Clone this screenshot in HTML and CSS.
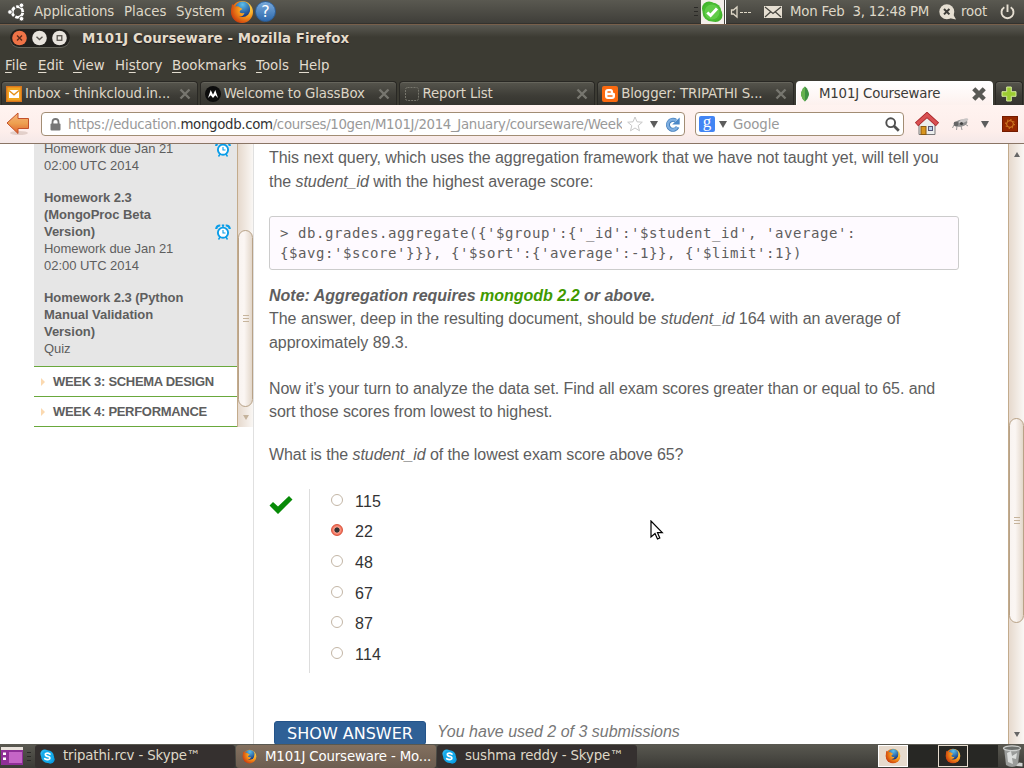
FILE: index.html
```html
<!DOCTYPE html>
<html lang="en">
<head>
  <meta charset="UTF-8">
  <title>M101J Courseware</title>
  <link rel="stylesheet" href="styles.css">
</head>
<body>

  <!-- Shared icons -->
  <svg class="defs" width="0" height="0">
    <defs>
      <radialGradient id="fox" cx="0.75" cy="0.3" r="0.85">
        <stop offset="0" stop-color="#ffe45a"/><stop offset="0.45" stop-color="#f89a1c"/><stop offset="1" stop-color="#c8360c"/>
      </radialGradient>
      <radialGradient id="globe" cx="0.5" cy="0.2" r="0.8">
        <stop offset="0" stop-color="#5cc0ec"/><stop offset="1" stop-color="#12317c"/>
      </radialGradient>
      <linearGradient id="arrow" x1="0" y1="0" x2="0" y2="1">
        <stop offset="0" stop-color="#f9b27a"/><stop offset="0.5" stop-color="#eda050"/><stop offset="1" stop-color="#e0602c"/>
      </linearGradient>
    </defs>
    <symbol id="firefox" viewBox="0 0 24 24">
      <circle cx="12" cy="12" r="11" fill="url(#fox)"/>
      <circle cx="12.5" cy="9.3" r="7.8" fill="url(#globe)"/>
      <path d="M2 4 L5 6.5 Q8 5.5 10 7.5 L12.5 9 Q10 10 9.5 12 Q11 14 14.5 13 Q13 17 9 16.5 Q12 20 17 17 Q21 14 20 7 Q24 12 21 17.5 Q17 23 11 22.5 Q3 21.5 1.5 14 Q1 8 2 4Z" fill="url(#fox)"/>
    </symbol>
    <symbol id="skype" viewBox="0 0 16 16">
      <circle cx="5" cy="5" r="4.6" fill="#2bb6f0"/><circle cx="11" cy="11" r="4.6" fill="#0a9be2"/><circle cx="8" cy="8" r="6.8" fill="#14a9ea"/>
      <path d="M10.7 5.4 Q8 3.4 5.9 5 Q5 7.2 8 7.8 Q11.4 8.5 10.3 10.6 Q8 12.3 5 10.4" fill="none" stroke="#fff" stroke-width="1.8" stroke-linecap="round"/>
    </symbol>
    <symbol id="close" viewBox="0 0 12 12">
      <path d="M1.5 1.5 L10.5 10.5 M10.5 1.5 L1.5 10.5" stroke="currentColor" stroke-width="2.4"/>
    </symbol>
    <symbol id="close-bold" viewBox="0 0 12 12">
      <path d="M1.5 1.5 L10.5 10.5 M10.5 1.5 L1.5 10.5" stroke="currentColor" stroke-width="3.8"/>
    </symbol>
    <symbol id="clock" viewBox="0 0 16 16">
      <circle cx="8" cy="8.7" r="5.1" fill="#fff" stroke="#0a9de8" stroke-width="1.9"/>
      <path d="M8 6 V9 H10.5" stroke="#0a9de8" stroke-width="1.1" fill="none"/>
      <path d="M1.2 5 Q1.5 1.2 5.3 1.5 M14.8 5 Q14.5 1.2 10.7 1.5" stroke="#0a9de8" stroke-width="2.2" fill="none"/>
      <path d="M3.5 15.5 L5 13.2 M12.5 15.5 L11 13.2 M6.8 1.2 H9.2 M8 1 V3.5" stroke="#0a9de8" stroke-width="1.5"/>
    </symbol>
  </svg>

  <!-- Top panel -->
  <div class="panel">
    <svg class="ubuntu" width="20" height="20" viewBox="0 0 20 20">
      <circle cx="10.5" cy="10" r="5.3" fill="none" stroke="#fff" stroke-width="2.8" stroke-dasharray="9.6 1.5" stroke-dashoffset="-0.8"/>
      <g fill="#fff" stroke="#494842" stroke-width="0.8"><circle cx="3" cy="10" r="2.3"/><circle cx="14.5" cy="3.3" r="2.3"/><circle cx="14.5" cy="16.7" r="2.3"/></g>
    </svg>
    <span class="pm-apps">Applications</span>
    <span class="pm-places">Places</span>
    <span class="pm-system">System</span>
    <svg class="pm-fox" width="24" height="24"><use href="#firefox"/></svg>
    <span class="help-icon">?</span>
    <div class="tray">
      <span class="grip"></span>
      <span class="skype-status">
        <svg width="22" height="24" viewBox="0 0 22 24">
          <circle cx="8" cy="8.5" r="7" fill="#42b42c"/><circle cx="14.5" cy="15" r="7" fill="#42b42c"/><circle cx="11" cy="12" r="9.5" fill="#48bb31"/><circle cx="11" cy="12" r="7.5" fill="#61cc48"/>
          <path d="M6.3 12.5 L9.6 15.5 L16 8.5" stroke="#fff" stroke-width="3" fill="none"/>
        </svg>
      </span>
      <svg class="speaker" width="22" height="14" viewBox="0 0 22 14">
        <path d="M1.5 5 H3.5 L7 2 V12 L3.5 9 H1.5Z" fill="none" stroke="#dfd8c8" stroke-width="1.3"/>
        <path d="M10 7.5 H21" stroke="#dfd8c8" stroke-dasharray="3 1"/>
      </svg>
      <svg class="mail" width="18" height="12" viewBox="0 0 18 12">
        <rect width="18" height="12" fill="#e6dfd2"/>
        <path d="M1 1 L9 7.5 L17 1 M1 11 L6.5 6 M17 11 L11.5 6" fill="none" stroke="#45443e" stroke-width="1.2"/>
      </svg>
      <span class="date">Mon Feb&nbsp; 3, 12:48 PM</span>
      <svg class="me" width="18" height="16" viewBox="0 0 18 16">
        <circle cx="7.8" cy="7.7" r="7.5" fill="#e6dfd2"/><path d="M10 14 L17 15.5 L14 10Z" fill="#e6dfd2"/>
        <path d="M5 5 L10.4 10.4 M10.4 5 L5 10.4" stroke="#3c3b37" stroke-width="2"/>
      </svg>
      <span class="user">root</span>
      <svg class="power" width="15" height="16" viewBox="0 0 15 16">
        <path d="M4.3 3.2 A6 6 0 1 0 10.7 3.2 M7.5 0.5 V8" fill="none" stroke="#e6dfd2" stroke-width="1.9"/>
      </svg>
    </div>
  </div>

  <!-- Window title -->
  <div class="titlebar">
    <div class="window-buttons">
      <svg width="60" height="18" viewBox="0 0 60 18">
        <circle cx="9.5" cy="9" r="7.3" fill="#ef7347"/><path d="M7 6.5 L12 11.5 M12 6.5 L7 11.5" stroke="#5c2b1b" stroke-width="1.4"/>
        <circle cx="29.5" cy="9" r="7.3" fill="#e8e4de"/><path d="M26.5 7.8 L29.5 10.6 L32.5 7.8" fill="none" stroke="#5a5650" stroke-width="1.4"/>
        <circle cx="49.5" cy="9" r="7.3" fill="#e8e4de"/><rect x="47.2" y="6.7" width="4.6" height="4.6" fill="none" stroke="#5a5650" stroke-width="1.3"/>
      </svg>
    </div>
    <span class="window-title">M101J Courseware - Mozilla Firefox</span>
  </div>

  <div class="menubar">
    <span class="m1"><u>F</u>ile</span>
    <span class="m2"><u>E</u>dit</span>
    <span class="m3"><u>V</u>iew</span>
    <span class="m4">Hi<u>s</u>tory</span>
    <span class="m5"><u>B</u>ookmarks</span>
    <span class="m6"><u>T</u>ools</span>
    <span class="m7"><u>H</u>elp</span>
  </div>

  <!-- Browser tabs -->
  <div class="tabs">
    <div class="tab">
      <svg width="16" height="16" viewBox="0 0 16 16"><rect x="0.7" y="0.7" width="14.6" height="14.6" fill="#f0a520" stroke="#d9761c" stroke-width="1.4"/><rect x="3" y="4" width="10" height="8" fill="#fff"/><path d="M3 4.5 L8 8.8 L13 4.5" fill="none" stroke="#e48f17" stroke-width="1.3"/></svg>
      <span class="tab-label">Inbox - thinkcloud.in...</span>
      <svg class="tab-close" width="12" height="12"><use href="#close"/></svg>
    </div>
    <div class="tab">
      <svg width="16" height="16" viewBox="0 0 16 16"><circle cx="8" cy="8" r="8" fill="#0c0c0c"/><path d="M3 12 L5.7 4 L8 8.8 L10.3 4 L13 12 L10.3 9.2 L8 12 L5.7 9.2Z" fill="#fff"/></svg>
      <span class="tab-label">Welcome to GlassBox</span>
      <svg class="tab-close" width="12" height="12"><use href="#close"/></svg>
    </div>
    <div class="tab">
      <svg width="16" height="16" viewBox="0 0 16 16"><rect x="1.5" y="1.5" width="13" height="13" rx="2" fill="none" stroke="#77766c" stroke-dasharray="2 1"/></svg>
      <span class="tab-label">Report List</span>
      <svg class="tab-close" width="12" height="12"><use href="#close"/></svg>
    </div>
    <div class="tab">
      <svg width="16" height="16" viewBox="0 0 16 16"><rect width="16" height="16" rx="2" fill="#fb6a10"/><path d="M6 3 H8.5 Q11 3 11 5.8 Q11 7 12 7 Q13 7 13 8 V10 Q13 13 10 13 H6 Q3 13 3 10 V6 Q3 3 6 3Z" fill="#fff"/><path d="M6 6 H8.2 M6 10 H10" stroke="#fb6a10" stroke-width="1.5" stroke-linecap="round"/></svg>
      <span class="tab-label">Blogger: TRIPATHI S...</span>
      <svg class="tab-close" width="12" height="12"><use href="#close"/></svg>
    </div>
    <div class="tab active">
      <svg width="16" height="16" viewBox="0 0 16 16"><path d="M7 0.5 Q3 4 3 9 Q4 13 7 15.5 Q10 13 11 9 Q11 4 7 0.5Z" fill="#3f9142"/><path d="M7 0.5 Q3 4 3 9 Q4 13 7 15.5Z" fill="#66b24f"/></svg>
      <span class="tab-label">M101J Courseware</span>
      <svg class="tab-close" width="14" height="14"><use href="#close-bold"/></svg>
    </div>
    <div class="tab new-tab">
      <svg width="16" height="16" viewBox="0 0 16 16"><path d="M5.7 1 H10.3 V5.7 H15 V10.3 H10.3 V15 H5.7 V10.3 H1 V5.7 H5.7Z" fill="#9ccc32" stroke="#d6eb9c"/></svg>
    </div>
  </div>

  <!-- Navigation bar -->
  <div class="navbar">
    <svg class="back" width="24" height="24" viewBox="0 0 24 24"><ellipse cx="13" cy="21" rx="9" ry="2" fill="#e3d0ca"/><path d="M1 11 L12 1 V6.5 H22.5 V16.5 H12 V21.5Z" fill="url(#arrow)" stroke="#c3502a"/></svg>
    <div class="urlbar">
      <svg width="11" height="13" viewBox="0 0 11 13"><path d="M2.5 6 V4 Q2.5 1 5.5 1 Q8.5 1 8.5 4 V6" fill="none" stroke="#777" stroke-width="1.8"/><rect x="0.5" y="5.5" width="10" height="7" rx="1" fill="#777"/></svg>
      <span class="url">https://education.<b>mongodb.com</b>/courses/10gen/M101J/2014_January/courseware/Week</span>
      <svg class="star" width="16" height="16" viewBox="0 0 16 16"><path d="M8 1 L10 5.8 L15.3 6.2 L11.2 9.6 L12.5 14.8 L8 12 L3.5 14.8 L4.8 9.6 L0.7 6.2 L6 5.8Z" fill="#fff" stroke="#c8c8c8"/></svg>
      <span class="drop"></span>
      <svg class="reload" width="15" height="15" viewBox="0 0 15 15"><path d="M12.5 10 A5 5 0 1 1 10.8 3.7" fill="none" stroke="#4580bd" stroke-width="4"/><path d="M14.7 0.5 V7.5 H7.2 Z" fill="#4a88c8"/><path d="M12.2 10 A5 5 0 1 1 10.8 3.7" fill="none" stroke="#7eaee0" stroke-width="2.4"/></svg>
    </div>
    <div class="searchbar">
      <span class="google">g</span>
      <span class="drop"></span>
      <span class="placeholder">Google</span>
      <svg width="15" height="15" viewBox="0 0 15 15"><circle cx="5.7" cy="5.7" r="4.4" fill="none" stroke="#505050" stroke-width="1.9"/><path d="M9 9 L13.8 13.8" stroke="#505050" stroke-width="2.7"/></svg>
    </div>
    <svg class="home" width="24" height="24" viewBox="0 0 24 24"><path d="M4 11 L12 4 L20 11 V22.5 H4Z" fill="#eceeed" stroke="#777"/><rect x="6" y="14.5" width="5" height="8" fill="#d9961f" stroke="#8b5a10"/><rect x="13.5" y="14.5" width="4" height="4" fill="#b8d0e6" stroke="#557"/><path d="M1.5 12.5 L12 3 L22.5 12.5" fill="none" stroke="#a52428" stroke-width="5"/><path d="M2 12 L12 3 L22 12" fill="none" stroke="#d95052" stroke-width="3.4"/></svg>
    <svg class="fly" width="18" height="14" viewBox="0 0 18 14"><path d="M2 8 L0.5 11 M5 9 L4.5 13 M9 9 L10 13 M13 7 L16 9" stroke="#999"/><ellipse cx="9" cy="6.2" rx="6.5" ry="3.4" fill="#8f8f8f" transform="rotate(-12 9 6)"/><ellipse cx="11.5" cy="4" rx="5" ry="1.8" fill="#c8c5c5" transform="rotate(-20 11 4)"/><circle cx="4" cy="7" r="2.4" fill="#666"/><circle cx="9.5" cy="6.5" r="1.6" fill="#444"/></svg>
    <span class="drop nav-drop"></span>
    <svg class="gear" width="16" height="16" viewBox="0 0 16 16"><rect x="0.5" y="0.5" width="15" height="15" fill="#962800" stroke="#741c00"/><circle cx="8" cy="8" r="3.4" fill="none" stroke="#d98a28"/><circle cx="8" cy="8" r="4.5" fill="none" stroke="#d98a28" stroke-dasharray="1.3 2.2"/></svg>
  </div>

  <!-- Page -->
  <div class="page">
    <div class="sidebar">
      <div class="lessons">
        <div class="lesson">
          <div class="lesson-text">Homework due Jan 21<br>02:00 UTC 2014</div>
          <svg class="clock first" width="16" height="16"><use href="#clock"/></svg>
        </div>
        <div class="lesson">
          <div class="lesson-text"><strong>Homework 2.3<br>(MongoProc Beta<br>Version)</strong><br>Homework due Jan 21<br>02:00 UTC 2014</div>
          <svg class="clock" width="16" height="16"><use href="#clock"/></svg>
        </div>
        <div class="lesson">
          <div class="lesson-text"><strong>Homework 2.3 (Python<br>Manual Validation<br>Version)</strong><br>Quiz</div>
        </div>
      </div>
      <div class="week"><span class="caret"></span>WEEK 3: SCHEMA DESIGN</div>
      <div class="week"><span class="caret"></span>WEEK 4: PERFORMANCE</div>
    </div>
    <div class="scroll side-scroll">
      <div class="thumb"><span class="lines"></span></div>
      <span class="scroll-down"></span>
    </div>

    <div class="content">
      <p class="intro">This next query, which uses the aggregation framework that we have not taught yet, will tell you<br>the <em>student_id</em> with the highest average score:</p>
      <pre>&gt; db.grades.aggregate({'$group':{'_id':'$student_id', 'average':
{$avg:'$score'}}}, {'$sort':{'average':-1}}, {'$limit':1})</pre>
      <p class="note">Note: Aggregation requires <a>mongodb 2.2</a> or above.</p>
      <p class="answer">The answer, deep in the resulting document, should be <em>student_id</em> 164 with an average of<br>approximately 89.3.</p>
      <p class="exercise">Now it’s your turn to analyze the data set. Find all exam scores greater than or equal to 65. and<br>sort those scores from lowest to highest.</p>
      <p class="question">What is the <em>student_id</em> of the lowest exam score above 65?</p>

      <div class="problem">
        <svg class="check" width="24" height="20" viewBox="0 0 24 20"><path d="M0.5 10.5 L4 7 L9 11.5 L20 1 L23.5 4.5 L9 19Z" fill="#078a07"/></svg>
        <div class="choices">
          <div class="choice"><span class="radio"></span>115</div>
          <div class="choice"><span class="radio checked"></span>22</div>
          <div class="choice"><span class="radio"></span>48</div>
          <div class="choice"><span class="radio"></span>67</div>
          <div class="choice"><span class="radio"></span>87</div>
          <div class="choice"><span class="radio"></span>114</div>
        </div>
      </div>

      <div class="actions">
        <span class="show-answer">SHOW ANSWER</span>
        <span class="used">You have used 2 of 3 submissions</span>
      </div>
    </div>

    <div class="scroll main-scroll">
      <span class="scroll-up"></span>
      <div class="thumb"><span class="lines"></span></div>
      <span class="scroll-down"></span>
    </div>
  </div>

  <!-- Bottom panel -->
  <div class="taskbar">
    <svg class="desktop" width="22" height="18" viewBox="0 0 22 18"><rect width="22" height="18" fill="#8f2f97"/><rect x="8" y="5" width="13" height="11" fill="#c565c6"/><rect width="22" height="3" fill="#e9e3dc"/><path d="M2 5.5 H5 V8 H2Z M2 10.5 H5 V13 H2Z" fill="#fff"/></svg>
    <span class="grip"></span>
    <div class="task"><svg width="15" height="15"><use href="#skype"/></svg><span>tripathi.rcv - Skype™</span></div>
    <div class="task current"><svg width="15" height="15"><use href="#firefox"/></svg><span>M101J Courseware - Mo...</span></div>
    <div class="task"><svg width="15" height="15"><use href="#skype"/></svg><span>sushma reddy - Skype™</span></div>
    <div class="workspaces">
      <div class="workspace on"><svg width="16" height="16"><use href="#firefox"/></svg></div>
      <div class="workspace empty"></div>
      <div class="workspace"><svg width="16" height="16"><use href="#firefox"/></svg></div>
      <div class="workspace empty"></div>
    </div>
    <svg class="trash" width="21" height="23" viewBox="0 0 21 23"><path d="M2 3 L4 20 Q10 24 16 20 L18 3Z" fill="#9a9c9a"/><path d="M5 8 L9 6 L10 11 L15 8 L14 14 L10 13 L11 19 L6 17Z" fill="#dcdedc"/><ellipse cx="10" cy="3.3" rx="8.5" ry="2.4" fill="#6c6f6c" stroke="#cfd1cf" stroke-width="1.3"/><path d="M14 21 L17 17.5 L20.5 18 V21.5Z" fill="#d0d2d0"/></svg>
  </div>

  <!-- Mouse pointer -->
  <svg class="pointer" width="14" height="21" viewBox="0 0 14 21"><path d="M1 1 V17 L5 13.5 L7.5 19 L9.8 18 L7.5 12.7 H12.3Z" fill="#fff" stroke="#000" stroke-width="1.2"/></svg>

</body>
</html>
```
FILE: styles.css
```css
* {
  box-sizing: border-box;
}

body {
  margin: 0;
  width: 1024px;
  height: 768px;
  overflow: hidden;
  background: #fff;
  font-family: "DejaVu Sans", sans-serif;
  font-size: 13.33px;
  white-space: nowrap;
}

svg {
  display: block;
  flex: none;
}

.defs {
  position: absolute;
}

/* Top panel */
.panel {
  display: flex;
  align-items: center;
  height: 24px;
  padding-left: 7px;
  background: linear-gradient(#5a5951, #3f3e39);
  border-bottom: 1px solid #33322e;
  color: #dfd8c8;
}

.ubuntu {
  margin-top: 1px;
}

.panel span {
  flex: none;
}

.pm-apps {
  width: 90px;
  margin-left: 7px;
  letter-spacing: -0.1px;
}

.pm-places {
  width: 52px;
}

.pm-system {
  width: 54px;
  letter-spacing: -0.15px;
}

.panel .help-icon {
  width: 21px;
  height: 21px;
  margin-left: 1px;
  border-radius: 50%;
  background: linear-gradient(#79aadb, #2e69ad);
  border: 1px solid #2c5e99;
  color: #fff;
  font-size: 16px;
  line-height: 19px;
  text-align: center;
}

.tray {
  display: flex;
  align-items: center;
  flex: none;
  width: 330px;
  margin-left: auto;
}

.grip {
  width: 4px;
  height: 9px;
  background: repeating-linear-gradient(#2b2a27 0 1px, transparent 1px 4px);
}

.skype-status {
  width: 24px;
  height: 24px;
  margin-left: 3px;
  background: #f4eeea;
  border-right: 1px solid #45443e;
  box-shadow: 1px 0 #fff;
}

.speaker {
  margin-left: 5px;
}

.mail {
  margin-left: 12px;
}

.date {
  width: 148px;
  margin-left: 8px;
  letter-spacing: -0.22px;
}

.me {
  margin-left: 1px;
}

.user {
  width: 39px;
  margin-left: 4px;
  letter-spacing: -0.2px;
}

/* Title bar and menu */
.titlebar {
  display: flex;
  align-items: center;
  height: 28px;
  padding-left: 10px;
  background: linear-gradient(#5a5952, #3c3b33 45%);
  border-top: 1px solid #775f4b;
}

.window-buttons {
  width: 60px;
  height: 18px;
  margin-top: -2px;
  border-radius: 9px;
  background: #22211e;
  box-shadow: 0 1px #66655c;
}

.window-title {
  margin-left: 12px;
  color: #e5dccb;
  font-weight: bold;
  letter-spacing: 0.07px;
  text-shadow: 0 1px 1px #201c20;
}

.menubar {
  display: flex;
  align-items: center;
  height: 27px;
  padding-left: 5px;
  background: #3c3b33;
  color: #e2dccf;
}

.menubar u {
  text-underline-offset: 2px;
}

.m1 { width: 33px; }
.m2 { width: 35px; }
.m3 { width: 42px; }
.m4 { width: 57px; }
.m5 { width: 84px; }
.m6 { width: 43px; }

/* Tabs */
.tabs {
  display: flex;
  align-items: flex-end;
  gap: 2px;
  height: 26px;
  padding-left: 1px;
  background: #3c3b33;
}

.tab {
  display: flex;
  align-items: center;
  width: 196.75px;
  height: 24px;
  padding: 0 6px 0 4px;
  border: 1px solid #292824;
  border-bottom: 0;
  border-radius: 4px 4px 0 0;
  background: linear-gradient(#56554d, #3d3c36 60%, #35342f);
  box-shadow: inset 0 1px #66655c;
  color: #ddd5c6;
}

.tab-label {
  margin-left: 3px;
  letter-spacing: -0.14px;
}

.tab-close {
  margin-left: auto;
  color: #77766f;
}

.tab.active {
  padding-left: 1px;
  background: linear-gradient(#fff, #fdf1ee);
  border-color: #fff;
  box-shadow: none;
  color: #3c3b37;
}

.active .tab-label {
  margin-left: 5px;
  letter-spacing: -0.18px;
}

.active .tab-close {
  color: #595955;
}

.tab.new-tab {
  width: 28px;
  padding: 0 0 0 5px;
}

/* Navigation */
.navbar {
  display: flex;
  align-items: center;
  height: 39px;
  padding-left: 6px;
  background: linear-gradient(#fff3f0, #fdeeeb 70%, #f4e8e8);
  border-bottom: 1px solid #8a7565;
}

.urlbar,
.searchbar {
  display: flex;
  align-items: center;
  height: 24px;
  border: 1px solid #a28d74;
  border-radius: 4px;
  background: #fff;
}

.urlbar {
  width: 644px;
  margin-left: 11px;
  padding-left: 8px;
}

.url {
  width: 554px;
  margin-left: 7px;
  overflow: hidden;
  color: #999;
  letter-spacing: -0.32px;
}

.url b {
  color: #333;
  font-weight: normal;
}

.star {
  margin-left: 5px;
}

.drop {
  width: 0;
  height: 0;
  margin-left: 7px;
  border: 4px solid transparent;
  border-top: 7px solid #5c5c5c;
  border-bottom: 0;
}

.reload {
  margin-left: 7px;
}

.searchbar {
  width: 209px;
  margin-left: 10px;
  padding: 0 3px;
}

.google {
  width: 16px;
  height: 16px;
  border-radius: 2px;
  background: #4285f4;
  color: #fff;
  font: 17px/12px "Liberation Serif", serif;
  text-align: center;
}

.searchbar .drop {
  margin-left: 4px;
}

.placeholder {
  flex: 1;
  margin-left: 6px;
  color: #999;
  letter-spacing: -0.1px;
}

.home {
  margin-left: 11px;
}

.fly {
  margin-left: 13px;
}

.nav-drop {
  margin-left: 11px;
}

.gear {
  margin-left: 13px;
}

/* Page */
.page {
  display: flex;
  align-items: flex-start;
  height: 600px;
  padding-left: 34px;
  overflow: hidden;
  font-family: "Liberation Sans", Arial, sans-serif;
  font-size: 16px;
  color: #5e5e5e;
}

.sidebar {
  width: 203px;
  font-size: 13px;
}

.lessons {
  height: 222px;
  background: #e6e6e6;
  overflow: hidden;
}

.lesson {
  display: flex;
  align-items: center;
  padding-left: 10px;
  margin-bottom: 15px;
  line-height: 17px;
  letter-spacing: -0.04px;
}

.lesson:first-child {
  margin-top: -4px;
}

.lesson-text {
  width: 171px;
}

.clock.first {
  margin-top: -17px;
}

.week {
  display: flex;
  align-items: center;
  height: 30px;
  border-top: 1px solid #69a83c;
  font-weight: bold;
  letter-spacing: -0.3px;
}

.week:last-child {
  height: 31px;
  border-bottom: 1px solid #69a83c;
}

.caret {
  margin: 0 8px 0 7px;
  border: 4px solid transparent;
  border-left-color: #fbd9b0;
  border-right: 0;
}

/* Scrollbars */
.scroll {
  display: flex;
  flex: none;
  flex-direction: column;
  align-items: center;
  width: 16px;
  border-left: 1px solid #c3ab8c;
  background: linear-gradient(90deg, #e6d9cd, #faf7f4);
}

.thumb {
  display: flex;
  align-items: center;
  justify-content: center;
  width: 15px;
  border: 1px solid #b8a287;
  border-radius: 8px;
  background: linear-gradient(90deg, #f9f4f1, #fbf6f3 40%, #e3d7ca);
}

.lines {
  width: 6px;
  height: 7px;
  background: repeating-linear-gradient(#c6b49c 0 1px, transparent 1px 3px);
}

.scroll-up,
.scroll-down {
  border: 3px solid transparent;
}

.scroll-up {
  margin-top: 8px;
  border-top: 0;
  border-bottom: 5px solid #666;
}

.scroll-down {
  border-bottom: 0;
  border-top: 5px solid #666;
}

.side-scroll {
  height: 283px;
  padding-top: 86px;
}

.side-scroll .thumb {
  height: 177px;
}

.side-scroll .scroll-down {
  margin-top: 8px;
  border-top-color: #c5b39c;
}

.main-scroll {
  height: 600px;
}

.main-scroll .thumb {
  height: 205px;
  margin-top: 261px;
}

.main-scroll .scroll-down {
  margin-top: auto;
  margin-bottom: 7px;
}

/* Content */
.content {
  width: 755px;
  height: 600px;
  padding-left: 15px;
  border-left: 1px solid #e0e0e0;
}

.content p {
  margin: 0;
  line-height: 24px;
}

.content .intro {
  margin-top: 2px;
  letter-spacing: -0.043px;
}

pre {
  width: 690px;
  height: 54px;
  margin: 22px 0 0;
  padding: 6px 10px;
  border: 1px solid #ccc;
  border-radius: 3px;
  background: #fefaff;
  font-family: "DejaVu Sans Mono", monospace;
  font-size: 14px;
  line-height: 20px;
  letter-spacing: 0.57px;
}

.content .note {
  margin-top: 14px;
  line-height: 23px;
  font-weight: bold;
  font-style: italic;
}

.note a {
  color: #3f9a00;
}

.content .answer {
  letter-spacing: -0.025px;
}

.content .exercise {
  margin-top: 22px;
  line-height: 23px;
  letter-spacing: -0.07px;
}

.content .question {
  margin-top: 20px;
  letter-spacing: -0.08px;
}

.problem {
  display: flex;
  margin-top: 22px;
}

.check {
  margin-top: 6px;
}

.choices {
  height: 184px;
  margin-left: 16px;
  padding-left: 21px;
  border-left: 1px solid #ddd;
  color: #333;
}

.choice {
  display: flex;
  align-items: center;
  height: 30.6px;
  padding-bottom: 5px;
  letter-spacing: 0.2px;
}

.radio {
  width: 12px;
  height: 12px;
  margin: -4px 12px 0 0;
  border: 1px solid #c3b6a6;
  border-radius: 50%;
}

.radio.checked {
  border-color: #d8553d;
  background: radial-gradient(circle, #333 0 2.2px, #f9a290 3px, #ee523b 6px);
}

.actions {
  display: flex;
  padding-left: 5px;
  margin-top: 48px;
}

.show-answer {
  width: 152px;
  height: 24px;
  border: 1px solid #24548a;
  border-radius: 3px;
  background: #2f6096;
  color: #fff;
  font: 16px/23px "DejaVu Sans", sans-serif;
  text-align: center;
}

.used {
  margin-left: 11px;
  line-height: 22px;
  color: #777;
  font-style: italic;
}

/* Bottom panel */
.taskbar {
  display: flex;
  align-items: center;
  height: 24px;
  padding-left: 1px;
  background: linear-gradient(#5a5951, #3b3a36);
  color: #dfd8c8;
}

.taskbar .grip {
  margin: 0 4px 0 4px;
}

.task {
  display: flex;
  align-items: center;
  width: 200px;
  height: 23px;
  margin-right: 1px;
  padding-left: 5px;
  border-radius: 3px;
  background: #35302f;
}

.task span {
  margin: -1px 0 0 8px;
  letter-spacing: -0.14px;
}

.task.current {
  padding-left: 6px;
  background: linear-gradient(#83705f, #6c5d50);
  color: #fff;
}

.task.current span {
  margin-top: 0;
}

.workspaces {
  display: flex;
  margin-left: auto;
  background: #272724;
}

.workspace {
  display: flex;
  align-items: center;
  justify-content: center;
  width: 30px;
  height: 22px;
  border: 1px solid #e6dccf;
}

.workspace.on {
  background: #e6dacd;
  border-color: #fff;
}

.workspace.empty {
  border: 0;
}

.trash {
  margin: 0 1px 0 4px;
}

.pointer {
  position: absolute;
  left: 650px;
  top: 520px;
}
```
